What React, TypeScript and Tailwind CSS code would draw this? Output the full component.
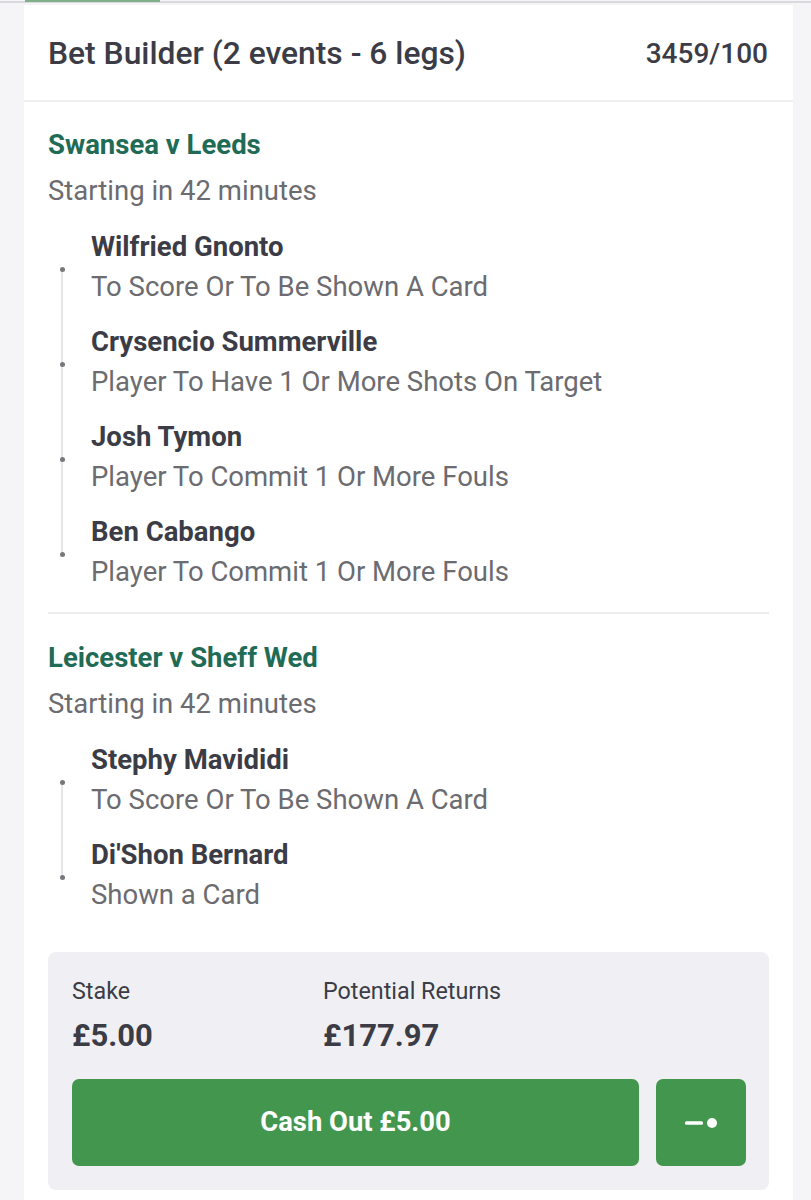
import React from "react";

type Leg = { name: string; market: string };
type Event = { title: string; start: string; legs: Leg[] };

const events: Event[] = [
  {
    title: "Swansea v Leeds",
    start: "Starting in 42 minutes",
    legs: [
      { name: "Wilfried Gnonto", market: "To Score Or To Be Shown A Card" },
      { name: "Crysencio Summerville", market: "Player To Have 1 Or More Shots On Target" },
      { name: "Josh Tymon", market: "Player To Commit 1 Or More Fouls" },
      { name: "Ben Cabango", market: "Player To Commit 1 Or More Fouls" },
    ],
  },
  {
    title: "Leicester v Sheff Wed",
    start: "Starting in 42 minutes",
    legs: [
      { name: "Stephy Mavididi", market: "To Score Or To Be Shown A Card" },
      { name: "Di'Shon Bernard", market: "Shown a Card" },
    ],
  },
];

function EventBlock({ ev }: { ev: Event }) {
  return (
    <div>
      <div className="text-[27.5px] leading-[40px] font-bold text-[#1f6b55]">{ev.title}</div>
      <div className="mt-[6px] text-[27.5px] leading-[40px] text-[#6b6b70]">{ev.start}</div>
      <div className="relative mt-[16px] pl-[43px] flex flex-col gap-[15px]">
        {ev.legs.map((l, i) => (
          <div key={i} className="relative">
            {i < ev.legs.length - 1 && (
              <div className="absolute left-[-30px] top-[42px] h-[95px] w-[2px] bg-[#e6e6ea]" />
            )}
            <div className="absolute left-[-31px] top-[40px] h-[5px] w-[5px] rounded-full bg-[#77777c]" />
            <div className="text-[27.5px] leading-[40px] font-bold text-[#3b3c46]">{l.name}</div>
            <div className="text-[27.5px] leading-[40px] text-[#6b6b70]">{l.market}</div>
          </div>
        ))}
      </div>
    </div>
  );
}

export default function App() {
  return (
    <div
      className="w-[811px] h-[1200px] overflow-hidden bg-[#f5f5f7] flex flex-col"
      style={{ fontFamily: "Roboto, 'Noto Sans', sans-serif" }}
    >
      <div className="relative h-[4px] shrink-0">
        <div className="absolute left-0 right-0 top-[1px] h-[2px] bg-[#d9d9de]" />
        <div className="absolute left-[25px] top-0 h-[2px] w-[135px] bg-[#7fb08a]" />
      </div>
      <div className="ml-[24px] mr-[18px] mt-[1px] flex-1 bg-white">
        <div className="h-[97px] flex items-center justify-between pl-[24px] pr-[25px] pt-[2px] border-b-2 border-[#f0f0f3]">
          <div className="text-[31.8px] font-medium text-[#3b3c46]">Bet Builder (2 events - 6 legs)</div>
          <div className="text-[28px] font-medium text-[#3b3c46]">3459/100</div>
        </div>
        <div className="pl-[24px] pr-[24px] pt-[23px]">
          <EventBlock ev={events[0]} />
          <div className="mt-[20px] mb-[24px] h-[2px] bg-[#ececef]" />
          <EventBlock ev={events[1]} />
          <div className="mt-[37px] rounded-[8px] bg-[#f0f0f4] pl-[24px] pr-[23px] pt-[24px] pb-[24px]">
            <div className="flex">
              <div className="w-[251px]">
                <div className="text-[23.3px] leading-[30px] text-[#3b3c46]">Stake</div>
                <div className="mt-[10px] text-[31px] leading-[40px] font-bold text-[#3b3c46]">£5.00</div>
              </div>
              <div>
                <div className="text-[23.3px] leading-[30px] text-[#3b3c46]">Potential Returns</div>
                <div className="mt-[10px] text-[31px] leading-[40px] font-bold text-[#3b3c46]">£177.97</div>
              </div>
            </div>
            <div className="mt-[23px] flex gap-[17px]">
              <button className="flex-1 h-[87px] rounded-[7px] bg-[#43964e] text-white text-[27.4px] font-bold">
                Cash Out £5.00
              </button>
              <button className="w-[90px] h-[87px] rounded-[7px] bg-[#43964e] flex items-center justify-center">
                <svg width="32" height="12" viewBox="0 0 32 12">
                  <rect x="0" y="4.3" width="18" height="3.5" rx="1.5" fill="white" />
                  <circle cx="27" cy="6" r="5" fill="white" />
                </svg>
              </button>
            </div>
          </div>
        </div>
      </div>
    </div>
  );
}
